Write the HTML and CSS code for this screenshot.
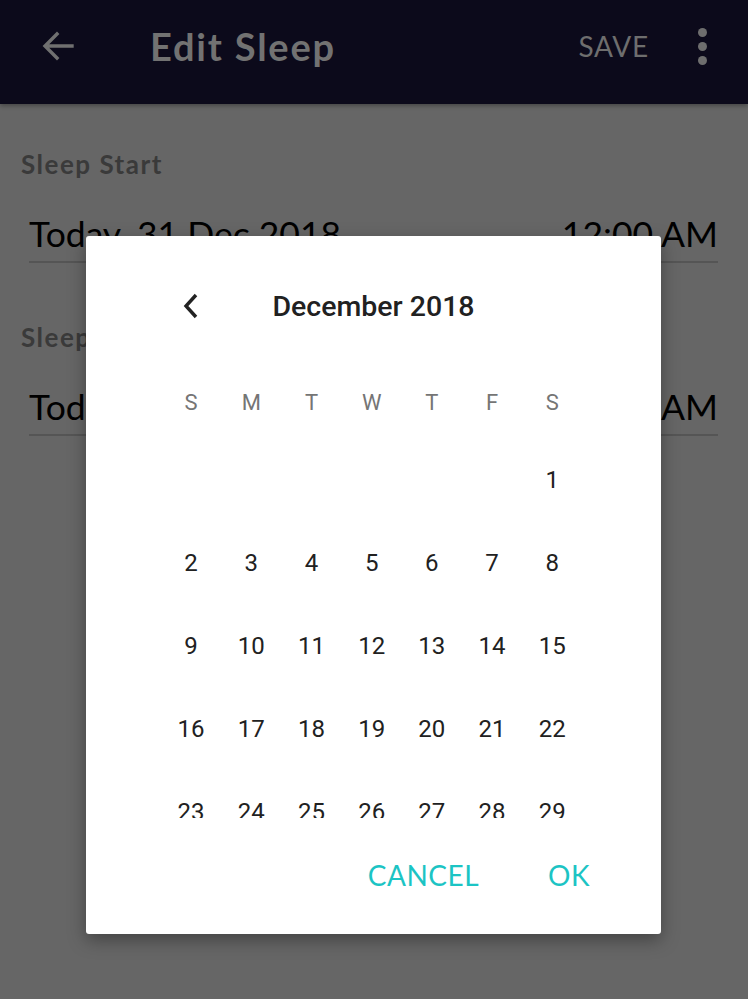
FILE: index.html
```html
<!DOCTYPE html>
<html>
<head>
<meta charset="utf-8">
<link rel="stylesheet" href="styles.css">
</head>
<body>
<header class="appbar">
  <svg class="back" viewBox="0 0 40 40" width="40" height="40"><path d="M34 20H8M19 8L7 20l12 12" fill="none" stroke="#707070" stroke-width="3.4" stroke-linecap="square"/></svg>
  <h1 class="title">Edit Sleep</h1>
  <span class="save">SAVE</span>
  <span class="more"><i></i><i></i><i></i></span>
</header>
<main class="content">
  <section class="field">
    <div class="label">Sleep Start</div>
    <div class="value"><span>Today, 31 Dec 2018</span><span>12:00 AM</span></div>
  </section>
  <section class="field">
    <div class="label">Sleep End</div>
    <div class="value"><span>Today, 31 Dec 2018</span><span>8:00 AM</span></div>
  </section>
</main>
<div class="dialog">
  <div class="month">
    <svg class="chev" viewBox="0 0 20 26" width="20" height="26"><path d="M15 2L5 13l10 11" fill="none" stroke="#222" stroke-width="3.4"/></svg>
    <div class="month-title">December 2018</div>
    <span></span>
  </div>
  <div class="cal">
    <div class="grid wk">
      <span>S</span><span>M</span><span>T</span><span>W</span><span>T</span><span>F</span><span>S</span>
    </div>
    <div class="grid days">
      <span></span><span></span><span></span><span></span><span></span><span></span><span>1</span>
      <span>2</span><span>3</span><span>4</span><span>5</span><span>6</span><span>7</span><span>8</span>
      <span>9</span><span>10</span><span>11</span><span>12</span><span>13</span><span>14</span><span>15</span>
      <span>16</span><span>17</span><span>18</span><span>19</span><span>20</span><span>21</span><span>22</span>
      <span>23</span><span>24</span><span>25</span><span>26</span><span>27</span><span>28</span><span>29</span>
      <span>30</span><span>31</span><span></span><span></span><span></span><span></span><span></span>
    </div>
  </div>
  <div class="actions">
    <span class="btn">CANCEL</span>
    <span class="btn">OK</span>
  </div>
</div>
</body>
</html>
```
FILE: styles.css
```css
html, body {
  margin: 0;
  padding: 0;
}
body {
  width: 748px;
  height: 999px;
  background: #666666;
  font-family: "Lato", "Liberation Sans", sans-serif;
  overflow: hidden;
  position: relative;
}
.appbar {
  height: 104px;
  background: #0c0a1b;
  display: flex;
  align-items: center;
  padding: 0 0 0 38px;
  box-sizing: border-box;
  box-shadow: 0 2px 4px rgba(0,0,0,0.3);
}
.back {
  display: block;
  margin-top: -12px;
}
.title {
  margin: -12px 0 0 72px;
  font-size: 38px;
  font-weight: 700;
  color: #727272;
  letter-spacing: 1.8px;
  flex: 1;
}
.save {
  font-size: 28px;
  color: #6e6e6e;
  margin-top: -12px;
  letter-spacing: 0.8px;
}
.more {
  display: flex;
  flex-direction: column;
  gap: 5px;
  margin: -12px 41px 0 49px;
}
.more i {
  display: block;
  width: 9px;
  height: 9px;
  border-radius: 50%;
  background: #6e6e6e;
}
.content {
  padding: 44px 30px 0 21px;
}
.field {
  margin-bottom: 58px;
}
.label {
  font-size: 26px;
  font-weight: 700;
  color: #3a3a3a;
  line-height: 32px;
  letter-spacing: 1.5px;
}
.value {
  display: flex;
  justify-content: space-between;
  margin-left: 8px;
  font-size: 35.5px;
  color: #000;
  line-height: 44px;
  padding-top: 32px;
  padding-bottom: 5px;
  border-bottom: 2px solid #555;
}
.dialog {
  position: absolute;
  left: 86px;
  top: 236px;
  width: 575px;
  height: 698px;
  background: #fff;
  border-radius: 3px;
  box-shadow: 0 6px 18px rgba(0,0,0,0.35);
  display: flex;
  flex-direction: column;
  font-family: "Roboto", "Liberation Sans", sans-serif;
}
.month {
  display: grid;
  grid-template-columns: 60px 1fr 60px;
  align-items: center;
  margin: 46px 75px 0 75px;
  height: 48px;
}
.chev {
  justify-self: center;
  display: block;
}
.month-title {
  text-align: center;
  font-size: 28.5px;
  font-weight: 500;
  color: #212121;
}
.cal {
  margin-top: 36px;
  height: 452px;
  overflow: hidden;
}
.grid {
  display: grid;
  grid-template-columns: repeat(7, 60.2px);
  margin-left: 75px;
}
.grid span {
  text-align: center;
}
.wk {
  height: 72px;
  align-items: center;
  font-size: 22px;
  color: #757575;
}
.days {
  grid-auto-rows: 83.2px;
  align-items: center;
  font-size: 24px;
  color: #212121;
}
.actions {
  margin-top: 33px;
  display: flex;
  justify-content: flex-end;
  align-items: center;
  height: 48px;
  padding-right: 71px;
  gap: 69px;
  font-family: "Lato", "Liberation Sans", sans-serif;
}
.btn {
  font-size: 28px;
  color: #1cc4c4;
  letter-spacing: 0.5px;
}
```
